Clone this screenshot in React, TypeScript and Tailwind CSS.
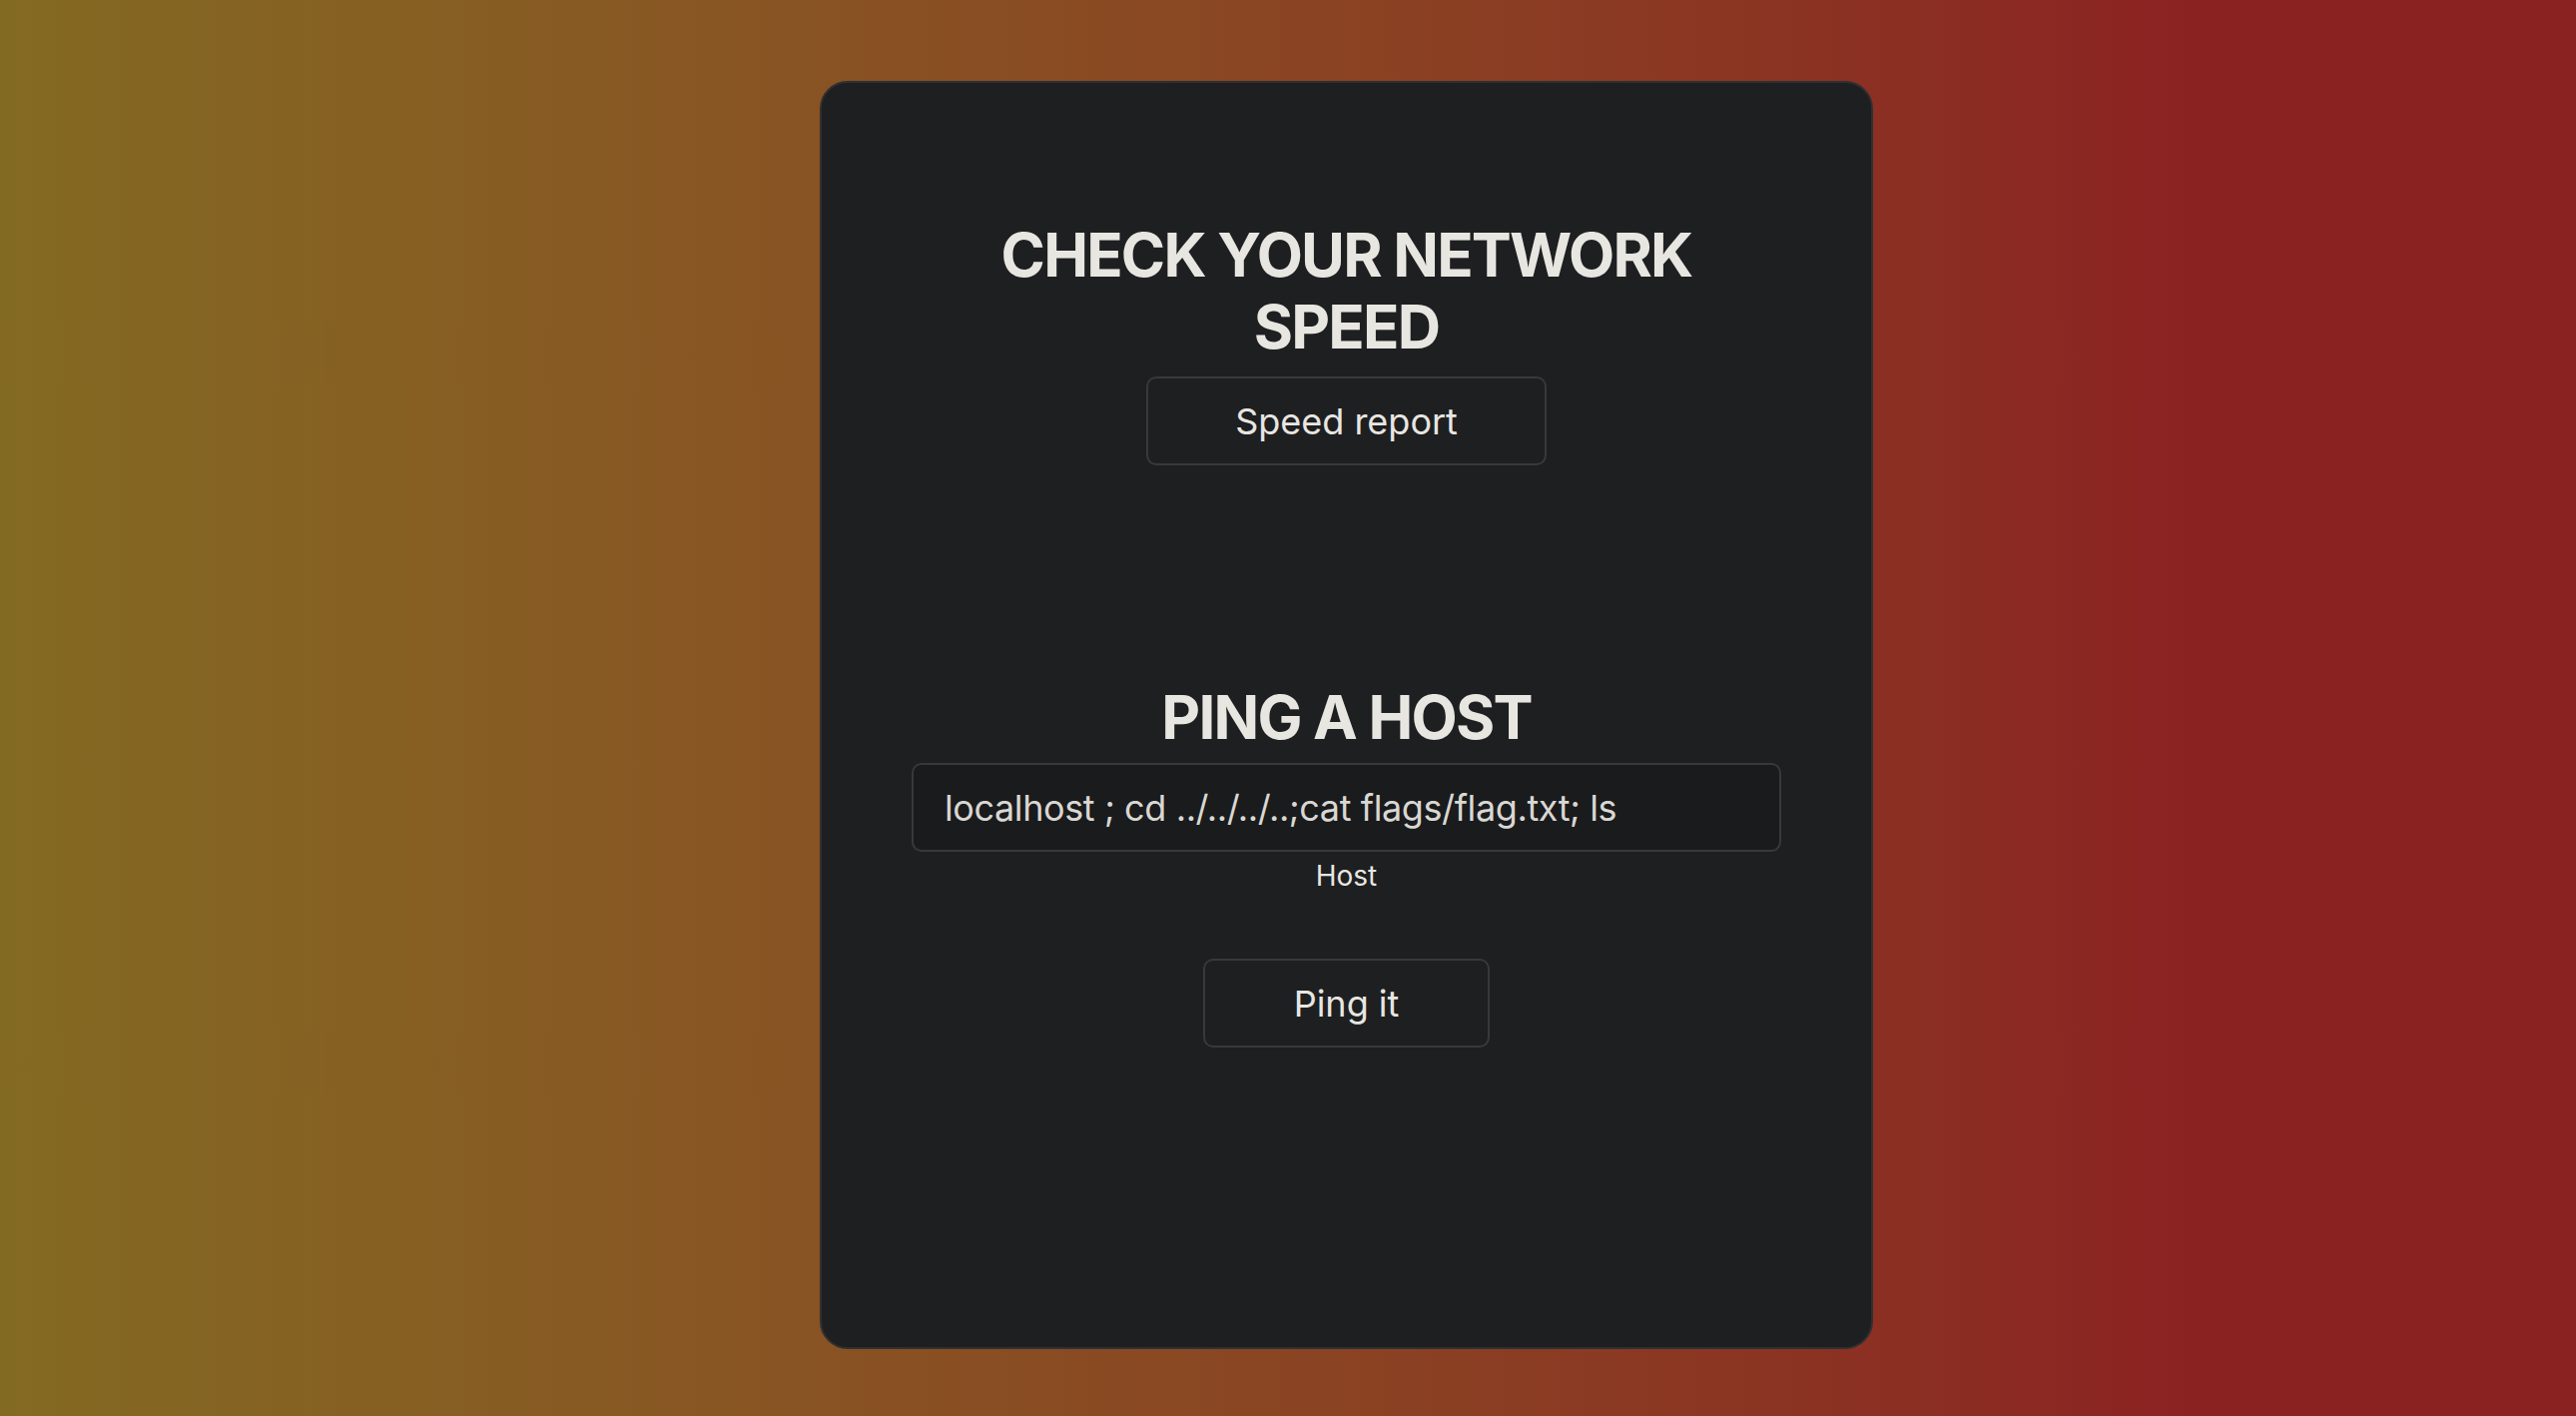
export default function App() {
  return (
    <div className="min-h-screen w-full bg-linear-to-r from-[#836a22] to-[#8b2222] to-85% pt-[81px] pb-[67px] font-['Inter',sans-serif] text-[#e8e6e1]">
      <div className="ml-[821px] flex h-[1270px] w-[1055px] flex-col items-center rounded-[28px] border-2 border-[#2f3032] bg-[#1e1f21] px-[90px] pt-[136px]">
        {/* Speed section */}
        <h1 className="w-[800px] text-center text-[60px] leading-[72px] font-bold tracking-[-1.8px]">
          CHECK YOUR NETWORK SPEED
        </h1>
        <button className="mt-[14px] h-[89px] w-[401px] rounded-[10px] border-2 border-[#38393b] text-[36px] leading-none text-[#e8e6e1]">
          Speed report
        </button>

        {/* Ping section */}
        <h1 className="mt-[216px] text-center text-[60px] leading-[72px] font-bold tracking-[-1.8px]">
          PING A HOST
        </h1>
        <input
          readOnly
          value="localhost ; cd ../../../..;cat flags/flag.txt; ls"
          className="mt-[10px] h-[89px] w-full rounded-[10px] border-2 border-[#38393b] bg-[#1a1b1d] px-[31px] text-[36px] tracking-[-0.4px] text-[#d9d7d2] outline-none"
        />
        <label className="mt-[7px] text-[28px] leading-[34px] text-[#e8e6e1]">Host</label>
        <button className="mt-[66px] h-[89px] w-[287px] rounded-[10px] border-2 border-[#38393b] text-[36px] leading-none text-[#e8e6e1]">
          Ping it
        </button>
      </div>
    </div>
  );
}
